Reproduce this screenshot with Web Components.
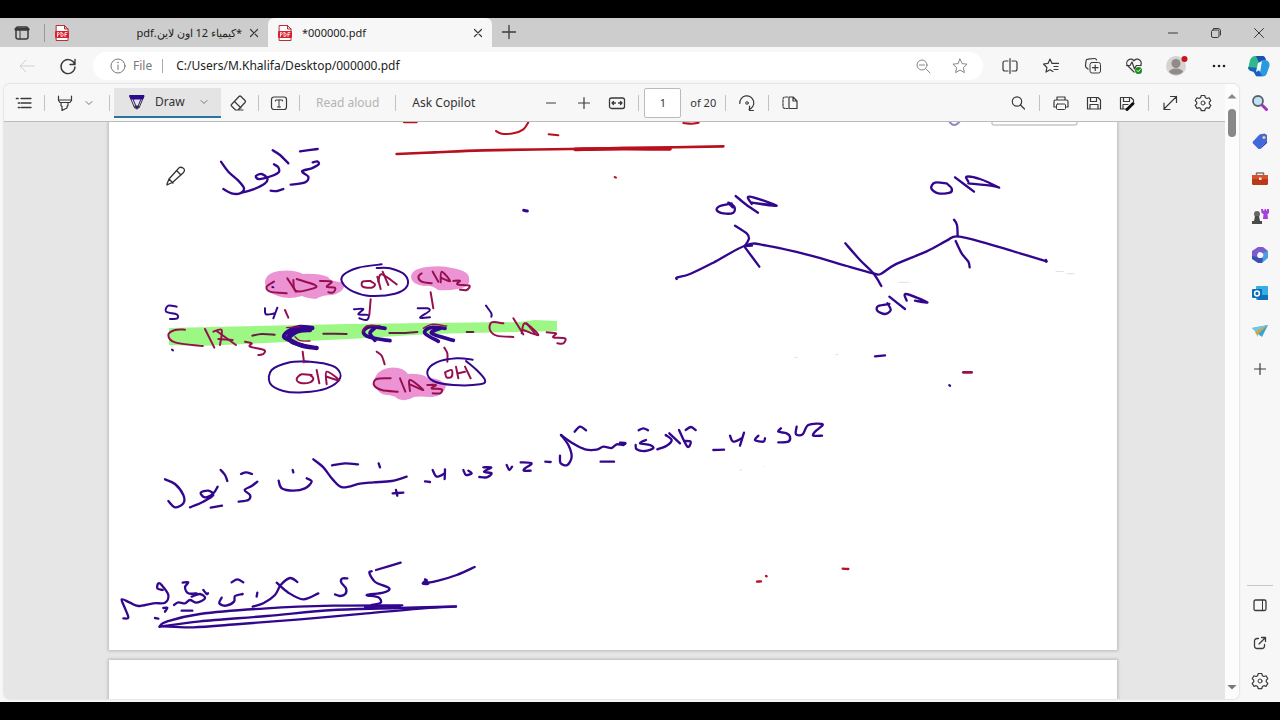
<!DOCTYPE html>
<html lang="en">
<head>
<meta charset="utf-8">
<title>000000.pdf</title>
<style>
html,body{margin:0;height:100%}
body{background:#000;color:#333;font:12px/16px "Noto Sans","Open Sans",sans-serif}
</style>
</head>
<body>
<browser-window></browser-window>
<script>
const ICONS = {
tabs:'<rect x="4" y="4" width="12" height="12" rx="2" stroke-width="1.5"/><path d="M4 6.2h12" stroke-width="3"/><path d="M8 7v9"/>',
close:'<path d="M6.5 6.5l7 7M13.500 6.500l-7 7" stroke-width="1.200"/>',
plus:'<path d="M10 4.500v11M4.500 10h11" stroke-width="1.200"/>',
plusBig:'<path d="M10 3.500v13M3.500 10h13" stroke-width="1.300"/>',
minus:'<path d="M5.500 10h9" stroke-width="1.200"/>',
restore:'<rect x="5.500" y="7" width="7.500" height="7.500" rx="1.500"/><path d="M7.500 5.500h4.500a2.500 2.500 0 0 1 2.500 2.500v4"/>',
winclose:'<path d="M5.500 5.500l9 9M14.500 5.500l-9 9"/>',
back:'<path d="M17 10H3.500M9 4l-6 6 6 6" stroke="#cfcfcf"/>',
refresh:'<path d="M16.700 8.500A7 7 0 1 0 17 11M17 3.500v5h-5" stroke-width="1.400"/>',
info:'<circle cx="10" cy="10" r="7" stroke="#777"/><path d="M10 9v4.500" stroke="#777"/><circle cx="10" cy="6.500" r=".8" fill="#777" stroke="none"/>',
zoomout:'<g stroke="#888"><circle cx="9" cy="9" r="5"/><path d="M12.800 12.800l4.200 4.200M6.500 9h5"/></g>',
star:'<path stroke="#888" d="M10 3l2.100 4.600 5 .6-3.700 3.400 1 5L10 14.100l-4.400 2.500 1-5-3.700-3.400 5-.6z"/>',
split:'<path d="M8 5H5a2 2 0 0 0-2 2v6a2 2 0 0 0 2 2h3M12 5h3a2 2 0 0 1 2 2v6a2 2 0 0 1-2 2h-3M10 2.500v15" stroke-width="1.200"/>',
favs:'<path d="M12 15.500l-3-1.700-4 2.300.9-4.600L2.500 8l4.500-.6 2-4.400 2 4.400h6.500M13 10.500h4M13 13.500h4" stroke-width="1.200"/>',
collect:'<rect x="7" y="6.500" width="10.500" height="10.500" rx="2"/><path d="M12.200 9v5.500M9.500 11.700H15M5 13l-1.800-1.500a2 2 0 0 1-.7-1.500L3 5a2 2 0 0 1 2-1.800l6.500-.7A2 2 0 0 1 13.500 4" stroke-width="1.200"/>',
heart:'<path d="M10 16L3.500 9.500A4 4 0 0 1 10 4.800 4 4 0 0 1 16.500 9.500M2.500 9.500H6L8 6l2.500 7 1.800-3.500h5" stroke-width="1.200"/><circle cx="14.500" cy="14.500" r="3.500" fill="#1c8a1c" stroke="none"/><path d="M13 14.500l1.200 1.200L16.300 13.500" stroke="#fff"/>',
dots:'<g fill="#222" stroke="none"><circle cx="6" cy="10" r="1.300"/><circle cx="11" cy="10" r="1.300"/><circle cx="16" cy="10" r="1.300"/></g>',
avatar:'<circle cx="10" cy="10" r="10" fill="#d5d2d0" stroke="none"/><circle cx="10" cy="7.500" r="4.500" fill="#8e8b89" stroke="none"/><path d="M3 16q1-3.500 7-3.500t7 3.500a10 10 0 0 1-14 0" fill="#8e8b89" stroke="none"/><circle cx="18.500" cy="3" r="3" fill="#c4161c" stroke="none"/>',
copilot:'<g stroke="none"><path d="M6 0h7l3 5-5 3-3 8H4L-1 13 1 4Q3 0 6 0z" fill="#2fb88a"/><path d="M7 0h7q2 0 3 4l-5 1-1 4z" fill="#1c4fb5"/><path d="M13 4h3.500Q21 5 20.500 10L18 17q-1 3.500-5 3.500H7L11 17z" fill="#2a9ae0"/><path d="M-1 11q1 5 5 4l3 5h6l-1-2-3-6z" fill="#1a5fc2"/><path d="M9 7l4-2-2.500 9L7 16z" fill="#f3fbff"/></g>',
list:'<path d="M7 5.500h10M7 10h10M7 14.500h10" stroke-width="1.300"/><path d="M2.500 5.500h1.500M4.500 10h1M4.500 14.500h1" stroke-width="1.700"/>',
marker:'<path d="M3.500 3v4.500l1.500 2h10l1.500-2V3M3.500 7h13M6 9.500v3l1 1v4l5-2.500v-1.500l1-1v-3" stroke-width="1.200"/>',
chevron:'<path d="M7 8.500l3 3 3-3" stroke="#777"/>',
pen:'<path d="M3 4h14l-5 12h-4z" stroke="#33313e"/><path d="M3 3.500h14l-1.200 3.500H4.300z" fill="#2b0a8f" stroke="#2b0a8f"/><path d="M6 7l2.800 7M14 7l-2.800 7" stroke="#2b0a8f"/><path d="M8 14h4l-2 3z" fill="#2b0a8f"/>',
eraser:'<path d="M3.500 11.500l7.500-8q1-1 2 0l4 4q1 1 0 2L10 17H7.500L3.500 13q-.8-.8 0-1.500zM6.500 8.500l6.500 6.500M10 17h5" stroke-width="1.200"/>',
text:'<rect x="2.500" y="4" width="15" height="12.500" rx="2.500" stroke-width="1.200"/><path d="M6.500 8V7h7v1M10 7v7M8.500 14h3"/>',
fit:'<rect x="2.500" y="5" width="15" height="10.500" rx="2" stroke-width="1.300"/><path d="M5 10h3.500M11.500 10H15M6.500 8.500L5 10l1.500 1.500M13.500 8.500L15 10l-1.500 1.500" stroke-width="1.300"/>',
rotate:'<path d="M2.800 10.500A7 7 0 1 1 12 16.500M12.500 13v4.500h4" stroke-width="1.200"/><circle cx="10" cy="10" r="1.300"/>',
pages:'<path d="M9 4h4l4 4v7.500H9zM13 4v4h4" stroke-width="1.200"/><path d="M7.500 4H5a2 2 0 0 0-2 2v7.500a2 2 0 0 0 2 2h2.500" stroke-dasharray="2 1.300" stroke-width="1.200"/>',
search:'<circle cx="9" cy="8.500" r="4.700" stroke-width="1.200"/><path d="M12.500 12l4 4" stroke-width="1.200"/>',
print:'<path d="M5 14H3V8.500Q3 7 4.500 7h11Q17 7 17 8.500V14h-2M6 7V4h8v3" stroke-width="1.200"/><rect x="5.500" y="11" width="9" height="5.500" rx="1"/>',
save:'<path d="M3.500 4.500h10.500l2.500 2.500v9h-13zM6.500 4.500v4h6v-4M6 16v-4.500h8V16" stroke-width="1.200"/>',
saveas:'<path d="M9 16H3.500V4.500h10.500l2.500 2.500v2M6.500 4.500v4h6v-4M6 16v-4.500h5" stroke-width="1.200"/><path d="M10 16.500l6-6" stroke="#111" stroke-width="3"/>',
expand:'<path d="M4 16L16.500 3.500M10.500 3.500h6v6M4 10v6.500h6" stroke-width="1.200"/>',
gear:'<path stroke-width="1.200" d="M8.300 2.500h3.400l.7 2.200 1.500.8 2.200-.7 1.700 2.900-1.500 1.500v1.700l1.500 1.500-1.700 2.900-2.200-.6-1.500.8-.7 2.200H8.300l-.7-2.200-1.500-.8-2.200.6-1.700-2.900 1.500-1.500V9.200L2.200 7.700l1.700-2.900 2.200.7 1.500-.8z"/><circle cx="10" cy="10" r="2"/>',
sSearch:'<path d="M12.500 12.500l4 4" stroke="#a52cc8" stroke-width="3"/><circle cx="8" cy="8" r="5" fill="#bfe3f5" stroke="#58626c" stroke-width="1.800"/>',
tag:'<path d="M9.500 3.500l5-1 2.500 1.500v5.500l-7 8q-1 1-2 0l-5-5q-1-1 0-2z" fill="#4068dc" stroke="none"/><path d="M10 17.500l7-8V12l-6.500 6z" fill="#2a3cae" stroke="none"/><circle cx="14" cy="6.500" r="1.300" fill="#fff" stroke="#d9b45a"/>',
box:'<path d="M6.500 6V4h7v2" stroke="#777" stroke-width="1.500"/><rect x="2" y="6" width="16" height="10" rx="1.500" fill="#b93a18" stroke="none"/><path d="M2 6h16v4H2z" fill="#d9502a" stroke="none"/><rect x="9" y="8.500" width="2.500" height="2.500" fill="#ffe8d8" stroke="none"/>',
chess:'<g stroke="none"><circle cx="7" cy="7" r="3" fill="#666"/><path d="M5 9h4l1 5h2v3H2v-3h2z" fill="#4a4a4a"/><path d="M11 2h2v1.500h1.500V2h1.500v1.500h1V2h2v4l-1.500 1 .5 5h-5l.5-5-2-1z" fill="#a63fe0"/></g>',
m365:'<g stroke="none"><path d="M8 2h5l5 4-4 3-5-2-2 6-5-1V6z" fill="#7a5ccf"/><path d="M18 6v7l-6 5-5-2 5-3 1-5z" fill="#4a9fe0"/><path d="M2 11l5 1 6 1-1 5H8l-6-4z" fill="#3d4eb3"/><path d="M8.500 7.500h3.500l1.500 2.500-1.500 3H8.500L7 10z" fill="#f7f7f7"/></g>',
outlook:'<g stroke="none"><rect x="6" y="3" width="12" height="14" rx="1" fill="#35aee5"/><path d="M6 12h12v5H8z" fill="#1370b8"/><rect x="2" y="6" width="10" height="9" rx="1" fill="#0b6eb8"/></g><circle cx="7" cy="10.500" r="2.400" stroke="#fff" stroke-width="1.500"/>',
plane:'<g stroke="none"><path d="M2 7l16-3-6 12-4-3z" fill="#35a5d8"/><path d="M2 7l16-3L7 11z" fill="#6fc6e4"/><path d="M5 11L18 4 8 13v3z" fill="#d8a33b"/></g>',
panel:'<rect x="4" y="5" width="12" height="10.500" rx="1.500" stroke-width="1.300"/><path d="M12.500 5v10.500"/>',
open:'<path d="M8.500 5.500H7A2.500 2.500 0 0 0 4.500 8v5A2.500 2.500 0 0 0 7 15.500h5a2.500 2.500 0 0 0 2.500-2.500v-1.500M9 11l6.500-6.500M11.500 4.500h4v4" stroke-width="1.300"/>',
up:'<path d="M5.500 12.500L10 8l4.500 4.500z" fill="#888" stroke="none"/>',
down:'<path d="M5.500 8h9L10 12.500z" fill="#777" stroke="none"/>',
pdf:'<path d="M4.500 2.500h8l3.500 3.500v11.500h-11.500zM12.500 2.500V6H16" fill="#fff" stroke="#b5303a"/><rect x="3" y="8" width="14" height="7" rx="1" fill="#d8232f" stroke="none"/><path d="M5.500 13.500v-4h1.300q1 1.200 0 2.200H5.500M9 9.500v4q2.500.2 2.200-2T9 9.500M13 13.500v-4h2M13 11.500h1.500" stroke="#fff" stroke-width=".8"/>'
};
const svg = n => `<svg viewBox="0 0 20 20" width="20" height="20" fill="none" stroke="#3a3a3a" stroke-linejoin="round" stroke-linecap="round" aria-hidden="true">${ICONS[n]}</svg>`;
const define = (name, html) => customElements.define(name, class extends HTMLElement {
  constructor(){ super(); this.attachShadow({mode:'open'}).innerHTML = html; }
});
const ib = (icon,label) => `<icon-button icon="${icon}" label="${label}"></icon-button>`;

customElements.define('icon-button', class extends HTMLElement {
  connectedCallback(){
    if(this.shadowRoot) return;
    this.attachShadow({mode:'open'}).innerHTML = `<style>
:host{display:inline-flex;flex:none;width:var(--button-width,24px);height:24px}
button{all:unset;display:flex;flex:1;min-width:0;align-items:center;justify-content:center;cursor:pointer}
svg{overflow:visible;flex:none}
</style><button type="button" aria-label="${this.getAttribute('label')}">${svg(this.getAttribute('icon'))}</button>`;
  }
});

customElements.define('browser-tab', class extends HTMLElement {
  connectedCallback(){
    this.attachShadow({mode:'open'}).innerHTML = `<style>
:host{display:flex;box-sizing:border-box;align-items:center;height:29px;padding:0 4px 0 7px;width:224px;font-size:11px;color:#222}
:host([active]){background:#f7f7f7;border-radius:6px 6px 0 0}
.title{flex:1;white-space:nowrap;overflow:hidden;margin:0 2px 0 7px}
svg{flex:none}
icon-button{--button-width:20px}
</style>${svg('pdf')}<span class="title" dir="${this.getAttribute('dir')||'ltr'}"><slot></slot></span>${ib('close','Close tab')}`;
  }
});

define('tab-strip', `<style>
:host{display:flex;align-items:center;height:29px;background:#cdcdcd}
.actions{--button-width:44px;display:flex}
i{width:1px;height:18px;background:#999}
.first{width:223px}
.new{--button-width:34px;flex:1}
.controls{--button-width:43px;display:flex}
</style>
<div class="actions">${ib('tabs','Tab actions menu')}</div><i></i>
<browser-tab class="first" dir="rtl" style="direction:ltr">*كيمياء 12 اون لاين.pdf</browser-tab>
<browser-tab active>*000000.pdf</browser-tab>
<div class="new">${ib('plusBig','New tab')}</div>
<div class="controls">${ib('minus','Minimize')}${ib('restore','Restore')}${ib('winclose','Close')}</div>`);

define('address-bar', `<style>
:host{display:flex;align-items:center;height:37px;padding-left:6px}
.nav{--button-width:41px;display:flex;margin-right:5px}
.field{flex:1;min-width:0;display:flex;align-items:center;height:28px;border-radius:14px;background:#fff;padding:0 5px 0 13px}
label{color:#777;margin-left:3px}
i{width:1px;height:14px;background:#aaa;margin:0 13px 0 10px}
input{all:unset;flex:1;min-width:0;color:#222;height:20px}
.end{--button-width:37px;display:flex}
.tools{width:291px;margin-left:6px;display:grid;grid-template-columns:repeat(7,1fr);justify-items:center}
</style>
<div class="nav">${ib('back','Back')}${ib('refresh','Refresh')}</div>
<div class="field">${ib('info','Site information')}<label for="url">File</label><i></i><input id="url" value="C:/Users/M.Khalifa/Desktop/000000.pdf"><div class="end">${ib('zoomout','Zoom out')}${ib('star','Favorite')}</div></div>
<div class="tools">${ib('split','Split screen')}${ib('favs','Favorites')}${ib('collect','Collections')}${ib('heart','Browser essentials')}${ib('avatar','Profile')}${ib('dots','Settings and more')}${ib('copilot','Copilot')}</div>`);

define('pdf-toolbar', `<style>
:host{display:flex;align-items:center;height:38px;box-sizing:border-box;padding:0 10px 0 8px;background:#f7f7f7;border-bottom:1px solid #bbb}
div{display:flex;align-items:center}
i{flex:none;width:1px;height:16px;background:#c2c2c2;margin:0 8px}
i.tight{margin-right:4px}
button{all:unset;cursor:pointer;padding:0 8px;white-space:nowrap;color:#333}
button:disabled{color:#b3b3b3}
.draw{box-sizing:border-box;display:flex;align-items:center;width:107px;height:30px;padding:0 7px 0 13px;margin-right:5px;background:#e4e4e4;border-bottom:2px solid #2a749c}
.draw span{flex:1;margin-left:8px}
.zoom{gap:9px;margin-left:56px;flex:1}
.zoom i{margin:0}
input{box-sizing:border-box;width:37px;height:30px;border:1px solid #bbb;border-radius:2px;background:#fff;text-align:center;font:inherit;font-size:11px;color:#333;padding:0;margin-left:-4px}
.zoom span{white-space:nowrap;font-size:11px}
.right{gap:9px}.right i{margin:0}
</style>
<div>${ib('list','Contents')}<i></i>${ib('marker','Highlight')}${ib('chevron','Highlight colors')}<i class="tight"></i>
<button class="draw" type="button">${svg('pen')}<span>Draw</span>${svg('chevron')}</button>
${ib('eraser','Erase')}<i></i>${ib('text','Add text')}<i></i><button type="button" disabled>Read aloud</button><i></i><button type="button">Ask Copilot</button></div>
<div class="zoom">${ib('minus','Zoom out')}${ib('plus','Zoom in')}${ib('fit','Fit to width')}<i></i><input aria-label="Page number" value="1"><span>of 20</span><i></i>${ib('rotate','Rotate')}<i></i>${ib('pages','Page view')}</div>
<div class="right">${ib('search','Find')}<i></i>${ib('print','Print')}${ib('save','Save')}${ib('saveas','Save as')}<i></i>${ib('expand','Full screen')}${ib('gear','Settings')}</div>`);

/* Ink strokes: each group has an origin, a unit of a third of a pixel, a colour and a pen width. */
const V='#32078e', C='#96104f', R='#b8101c';
const INK = [
 [150,110,V,7,['213,155 235,185 265,212 282,235 270,250 245,250 220,237','275,248 310,238 345,220 352,205 335,192 318,198 325,207 350,203 385,188 385,172 372,163','368,121 390,135 415,160','450,124 503,117','488,157 502,154 506,163 485,175 456,184 475,200 465,217 422,224','362,242 382,243 400,237']],
 [150,110,V,9,['1121,301 1132,303']],
 [150,110,R,6,['762,37 800,37','1038,63 1055,71 1090,70 1120,58 1135,37','1196,73 1225,76','1394,201 1398,203','1600,39 1625,41 1646,38']],
 [150,110,R,8,['740,132 855,127 1000,121 1260,117 1500,113 1720,109']],
 [150,110,R,11,['1275,118 1420,116 1560,117']],
 [150,255,V,6,['80,155 55,152 48,170 80,178 82,190 60,192','345,160 348,178 375,175','382,158 370,190','367,96 370,97','66,284 69,286','612,163 640,162 625,178 655,180 650,195 628,190','470,320 420,322 365,345 360,385 400,408 460,412 530,400 570,370 560,340 520,325 460,318','695,28 625,38 580,60 578,85 610,110 660,123 735,116 772,92 765,60 720,40 680,39']],
 [150,255,C,6,['372,80 350,95 360,110 410,115','412,70 438,110','430,75 438,108 490,100 495,90 440,72','510,78 545,80 530,95 555,98 550,112 535,112','405,165 415,188','105,224 75,225 55,240 75,262 158,273','165,222 193,278','190,230 215,225 210,270','200,228 258,270','205,252 248,255','285,260 305,265 300,275 342,285 340,297 325,300','458,290 462,322','485,360 455,358 440,372 450,383 480,382 490,370 480,360','500,345 508,385','530,388 530,350 568,376 530,365']],
 [150,255,'#642044',6,['307,242 335,237 374,239','520,236 590,237']],
 [150,255,V,13,['487,219 450,216 420,226 402,245 425,258 455,272 500,279','455,220 420,238 425,260 475,276','480,225 440,230 413,250']],
 [150,255,C,4,['410,218 450,215','435,245 450,257 480,258']],
 [350,255,C,6,['62,78 38,80 38,95 65,98 75,88 60,78','82,65 92,102','85,80 95,58 140,88','98,50 115,90','215,55 205,65 215,80 245,85','248,50 265,80','272,82 275,50 300,78 272,68','310,78 330,77 322,88 358,92 350,105 330,104','62,133 58,180','242,112 250,160','80,290 95,302 104,328','122,370 80,372 72,390 95,405 143,410','150,370 166,410','180,408 180,375 220,405 180,388','232,390 258,390 245,400 275,403 270,415 248,415','283,278 292,295 292,320','285,352 305,345 305,365 290,367 285,352','318,335 325,370','325,355 345,350','345,335 362,370','460,205 425,202 420,225 440,242 490,246','490,190 520,238','515,235 525,205 565,240 520,225','530,205 555,235','590,232 618,235 610,247 645,250 640,265 622,265']],
 [350,255,'#642044',6,['118,234 160,234 202,231','350,231 370,231']],
 [350,255,V,11,['105,220 60,215 40,230 60,247 120,257','75,218 60,235 75,256','285,220 240,218 225,235 265,259','270,220 245,235 310,256']],
 [350,255,C,4,['90,212 50,213 38,230','290,213 245,208 220,220']],
 [350,255,V,6,['203,160 232,160 238,168 210,188 240,187','408,152 424,175 424,185','368,314 320,310 260,322 232,350 250,378 310,390 390,388 405,375 380,345 348,318']],
 [660,110,V,7,['215,280 180,288 170,300 190,310 220,308 223,290 205,278 218,292','227,258 260,285 294,308','275,282 268,260 350,287 275,278 350,287','225,347 260,370 267,385 255,408','255,412 298,470','50,507 52,502 90,492 160,458 260,405 320,407 450,436 560,468 640,490 662,492 705,464 800,424 860,392 893,379 980,400 1080,430 1160,454','276,407 254,408','556,400 600,450 640,490 664,528','688,582 655,588 652,602 675,612 692,600 682,580','688,560 735,597','740,572 738,552 802,577 765,572','882,329 891,345 893,379','887,393 905,430 925,455 929,472','860,220 825,218 814,235 835,250 870,248 875,235 862,222','885,202 942,245','925,215 920,200 960,207 1015,232 1000,228 925,220','645,739 675,736']],
 [660,110,C,8,['910,787 935,787']],
 [660,110,V,7,['868,826 870,827','1158,450 1158,455']],
 [660,110,'#ccc',2,['405,742 411,742','527,734 533,734','718,517 745,517','1188,484 1210,485','1222,491 1242,491']],
 [150,420,V,7,['45,178 75,192 100,225 100,250 75,262 55,243','120,262 160,245 190,225 175,212 152,218 165,232 190,220 203,200','212,150 225,165 232,183','273,162 288,157 306,162','322,185 305,198 284,210 300,225 295,240 266,245','182,263 216,257','386,182 395,205 430,212 465,205 485,185 470,175','428,150 430,157','490,118 520,142 548,178 578,202 630,191 670,187 725,183 770,170','546,136 585,130 624,133','686,130 690,142','728,220 760,218','738,210 742,227','825,184 840,186','848,150 860,170 885,160','885,148 884,177','940,150 948,165 965,160 955,152','1000,142 1024,142 1002,155 1025,160 1010,172 988,171']],
 [480,415,V,7,['80,150 88,165 96,155','122,142 155,145 135,160 132,167 152,167','196,140 212,141','243,60 265,90 275,125 262,150 242,145 240,122','243,60 278,85 315,103 350,104 370,95 395,99 410,88 430,90 436,84 420,83','284,50 300,35 318,46','362,140 402,140','476,46 490,40 504,46','498,75 480,85 510,90 520,100 495,108 470,103 467,90','532,103 560,92 575,75 557,60','568,55 600,85','597,45 622,95 632,80 612,78','617,45 633,36 647,45','700,105 732,104','750,62 760,80 785,70','792,53 780,92','835,62 825,75 850,80 855,70','903,40 895,50 920,55 930,65 925,80 895,82','950,35 948,58 968,58 985,30 1028,28 1005,50 1000,62 1026,62']],
 [480,415,'#ccc',2,['780,165 785,165','850,154 851,155']],
 [100,550,V,7,['70,205 85,203 75,175 65,148 90,158 115,168 160,160 195,158 205,135 185,105 175,100 172,115 188,120','165,204 175,206','195,185 202,173 190,174','248,98 265,97 255,112 265,130 290,130','222,165 235,157 255,160 270,150 290,158 315,145 300,132 275,140','310,120 320,132 324,130','245,182 277,182','365,143 358,160 378,167 402,155 405,138 428,132','395,97 412,88 430,97','472,128 470,140','458,170 490,160 525,135 542,105 570,84 592,96','530,98 565,128 610,148 655,130','742,85 726,86 724,98 738,115 736,132 720,138 705,133','828,60 902,38','815,64 808,68 820,90 832,100 868,115 850,128 800,135 835,142 842,158 815,165','975,88 985,101 968,100 980,90','970,101 1015,92 1070,75 1124,51','178,230 200,215 300,192 500,175 700,167 907,166','180,230 300,214 500,198 700,180 900,174 1068,169','190,229 280,232 420,222 600,208 800,190 970,175 1068,170','795,171 900,168']],
 [100,550,R,7,['1971,95 1983,94','1998,78 2000,79','2228,56 2245,57']]
];
function smooth(text){
  const p=text.split(' ').map(s=>s.split(',').map(Number));
  let d=`M${p[0]}`;
  for(let i=0;i<p.length-1;i++){
    const a=p[i-1]||p[i],b=p[i],c=p[i+1],e=p[i+2]||c;
    d+=`C${b[0]+(c[0]-a[0])/6} ${b[1]+(c[1]-a[1])/6} ${c[0]-(e[0]-b[0])/6} ${c[1]-(e[1]-b[1])/6} ${c[0]} ${c[1]}`;
  }
  return `<path d="${d}"/>`;
}
define('ink-layer', `<style>:host{display:block}svg{display:block;width:100%;height:auto}</style>
<svg viewBox="109 122 1008 528" role="img" aria-label="Handwritten chemistry notes">
<path d="M169 328L350 324 520 322 535 320 557 321V331L430 334 350 339 200 346 169 345z" fill="#9cf784"/>
<g fill="#ec93d3"><path d="M265 283q0-10 14-12 15-2 24 3 15-1 25 3 2 5 16 5 2 10-12 13-10 0-16 4-10-1-14-3-14 4-24 0-13-4-13-13z"/>
<path d="M411 277q0-8 16-10 15-2 25 1 17 3 17 10 2 9-11 11-11 2-20 1-6-5-14-4-13-2-13-9z"/>
<path d="M374 382q2-12 14-14 14-2 20 6 13-1 20 4 14 0 18 8-2 10-14 11-14-1-18 0-8 5-16 2-2-3-10-4-10 1-14-13z"/></g>
<g fill="none" stroke-linecap="round" stroke-linejoin="round">${INK.map(([x,y,c,w,s])=>`<g transform="translate(${x} ${y}) scale(.33333)" stroke="${c}" stroke-width="${w}">${s.map(smooth).join('')}</g>`).join('')}
<path d="M949 121q5 8 11 0" stroke="#8d89bd" stroke-width="2"/><path d="M992 121v3q0 1 2 1h81q2 0 2-1v-3" stroke="#aaa"/>
<path d="M167 184l2-5 9-10q2-3 5-1t0 5l-10 9-6 3zM169 179l4 4M177 171l4 4" fill="#fff" stroke="#333" stroke-width="1.300"/></g></svg>`);

define('pdf-page', `<style>:host{display:block;background:#fff;box-shadow:0 0 3px 1px #b8b8b8}</style><slot></slot>`);

define('pdf-viewer', `<style>
:host{display:flex;min-width:0;min-height:0;border-radius:6px;overflow:hidden;background:#fff;box-shadow:0 0 2px #bbb}
.main{flex:1;min-width:0;display:flex;flex-direction:column}
.scroll{flex:1;min-height:0;overflow:hidden;background:#e6e6e6;padding:0 108px 0 105px}
.next{aspect-ratio:1008/1426;margin-top:10px}
.bar{--button-width:14px;width:14px;display:flex;flex-direction:column;align-items:center;background:#fcfcfc}
.thumb{flex:none;width:8px;height:28px;border-radius:4px;background:#888;margin:1px 0 auto}
</style>
<div class="main"><pdf-toolbar></pdf-toolbar><div class="scroll"><pdf-page><ink-layer></ink-layer></pdf-page><pdf-page class="next"></pdf-page></div></div>
<div class="bar">${ib('up','Scroll up')}<div class="thumb"></div>${ib('down','Scroll down')}</div>`);

define('side-bar', `<style>
:host{display:flex;flex-direction:column;width:41px;align-items:center;box-sizing:border-box;padding-bottom:2px}
icon-button{height:38px;--button-width:40px}
.bottom{margin-top:auto;border-top:1px solid #c8c8c8;width:26px;display:flex;flex-direction:column;align-items:center}
</style>${ib('sSearch','Search')}${ib('tag','Shopping')}${ib('box','Tools')}${ib('chess','Games')}${ib('m365','Microsoft 365')}${ib('outlook','Outlook')}${ib('plane','Drop')}${ib('plus','Customize')}
<div class="bottom">${ib('panel','Hide sidebar')}${ib('open','Open externally')}${ib('gear','Settings')}</div>`);

define('browser-window', `<style>
:host{display:flex;flex-direction:column;box-sizing:border-box;height:100vh;border:solid #000;border-width:18px 0;background:#f7f7f7}
.body{flex:1;min-height:0;display:flex;padding-left:4px}
pdf-viewer{flex:1;margin-bottom:3px}
</style><tab-strip></tab-strip><address-bar></address-bar><div class="body"><pdf-viewer></pdf-viewer><side-bar></side-bar></div>`);
</script>
</body>
</html>
